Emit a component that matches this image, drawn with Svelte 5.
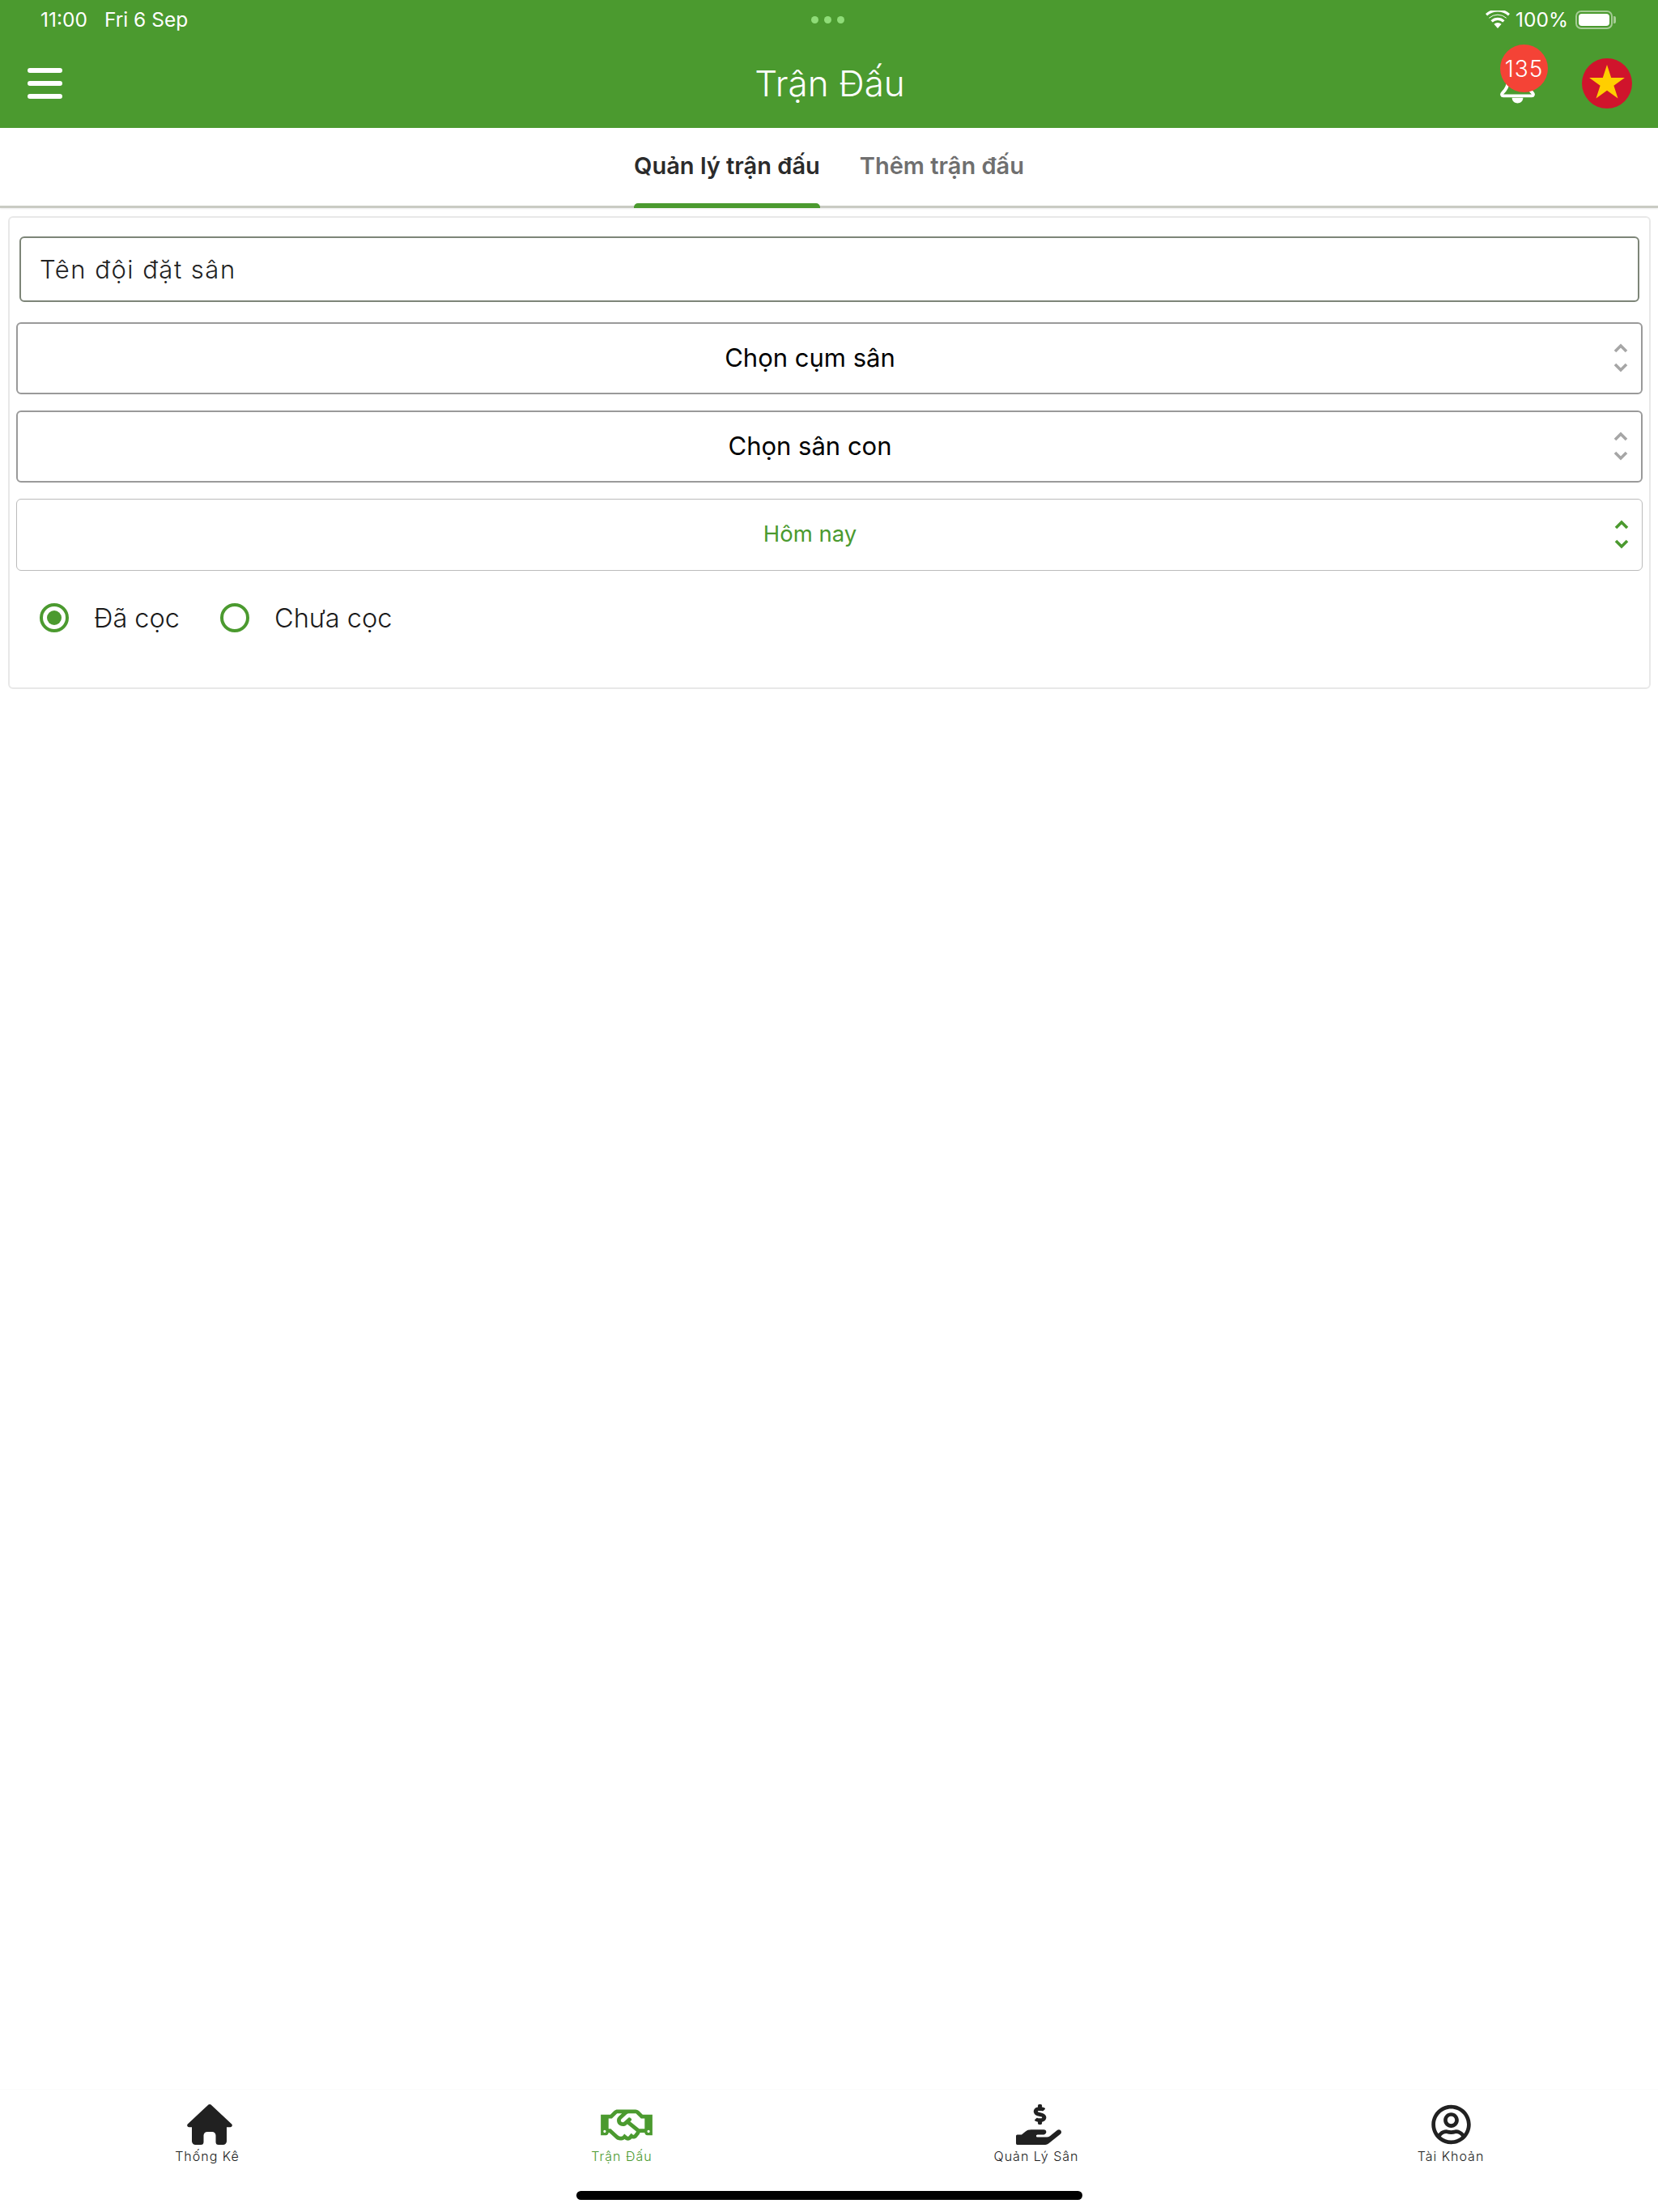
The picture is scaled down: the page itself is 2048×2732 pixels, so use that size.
<script>
  const tabs = [
    { label: 'Thống Kê', icon: 'home' },
    { label: 'Trận Đấu', icon: 'shake', active: true },
    { label: 'Quản Lý Sân', icon: 'hand' },
    { label: 'Tài Khoản', icon: 'user' }
  ];
  const selects = [
    { label: 'Chọn cụm sân' },
    { label: 'Chọn sân con' },
    { label: 'Hôm nay', active: true }
  ];
</script>

<div class="page">
  <header class="header">
    <div class="status">
      <div class="status-left"><span>11:00</span><span>Fri 6 Sep</span></div>
      <div class="dots"><i></i><i></i><i></i></div>
      <div class="status-right">
        <svg class="wifi" viewBox="0 0 30 22" aria-hidden="true">
          <path d="M15 22l-4.600-5.200a6.600 6.600 0 0 1 9.200 0z" fill="#fff"/>
          <path d="M7.600 13.400a10.800 10.800 0 0 1 14.800 0M1 5.200a21 21 0 0 1 28 0" fill="none" stroke="#fff" stroke-width="3.200"/>
          <path d="M4.300 9.300a16 16 0 0 1 21.400 0" fill="none" stroke="#fff" stroke-width="1"/>
        </svg>
        <span>100%</span>
        <div class="battery"><b></b></div>
      </div>
    </div>
    <div class="toolbar">
      <button class="menu" aria-label="menu"><i></i><i></i><i></i></button>
      <h1>Trận Đấu</h1>
      <div class="actions">
        <div class="bell">
          <svg viewBox="0 0 44 28" aria-hidden="true">
            <path d="M10 0c0 7-3 11-7 15-1.500 1.500-1 3.500 1 3.500h36c2 0 2.500-2 1-3.500-4-4-7-8-7-15" fill="none" stroke="#fff" stroke-width="4" stroke-linejoin="round"/>
            <path d="M15 21h14c0 9-14 9-14 0z" fill="#fff"/>
          </svg>
          <span class="badge">135</span>
        </div>
        <svg class="flag" viewBox="0 0 62 62" aria-hidden="true">
          <circle cx="31" cy="31" r="31" fill="#d0142c"/>
          <path d="M31 8L36.200 23.900H52.900L39.400 33.700L44.500 49.600L31 39.800L17.500 49.600L22.600 33.700L9.100 23.900H25.800Z" fill="#ffce00"/>
        </svg>
      </div>
    </div>
  </header>

  <nav class="tabbar">
    <span class="tab on">Quản lý trận đấu</span>
    <span class="tab">Thêm trận đấu</span>
  </nav>

  <section class="card">
    <div class="input">Tên đội đặt sân</div>
    {#each selects as s}
      <div class="select" class:active={s.active}>
        <span class="select-text">{s.label}</span>
        <svg class="chev" viewBox="0 0 18 36" aria-hidden="true">
          <path d="M2 10l7-7 7 7M2 26l7 7 7-7" fill="none" stroke="currentColor" stroke-width="3.600"/>
        </svg>
      </div>
    {/each}
    <div class="radios">
      <span class="radio on"></span><span class="radio-label">Đã cọc</span>
      <span class="radio"></span><span class="radio-label">Chưa cọc</span>
    </div>
  </section>

  <footer class="footer">
    <div class="nav">
      {#each tabs as t}
        <div class="nav-item" class:active={t.active}>
          <div class="nav-icon {t.icon}">
            {#if t.icon === 'home'}
              <svg width="56" height="50" viewBox="0 0 56 50" aria-hidden="true">
                <path fill="currentColor" d="M25.600 1.200c1.400-1.500 3.400-1.500 4.800 0l24.600 23c1.700 1.600.6 4-1.600 4h-4.400v17.300a4.500 4.500 0 0 1-4.500 4.500H39a3.500 3.500 0 0 1-3.500-3.500V38.500a4.500 4.500 0 0 0-4.500-4.500h-6a4.500 4.500 0 0 0-4.500 4.500V46.500A3.500 3.500 0 0 1 17 50h-6.500A4.500 4.500 0 0 1 6 45.500V28.200H2.600c-2.200 0-3.300-2.400-1.600-4z"/>
              </svg>
            {:else if t.icon === 'shake'}
              <svg width="64" height="51" viewBox="0 0 640 512" aria-hidden="true">
                <path fill="currentColor" d="M519.2 127.900l-47.600-47.600A56.252 56.252 0 0 0 432 64H205.200c-14.800 0-29.100 5.900-39.600 16.300L118 127.900H0v255.700h64c17.600 0 31.800-14.200 31.900-31.700h9.100l84.600 76.400c30.900 25.100 73.800 25.700 105.600 3.800 12.500 10.800 26 15.900 41.100 15.900 18.200 0 35.300-7.400 48.800-24 22.100 8.700 48.200 2.600 64-16.800l26.200-32.300c5.600-6.900 9.100-14.800 10.900-23h57.900c.1 17.500 14.400 31.700 31.900 31.700h64V127.900H519.200zM48 351.600c-8.800 0-16-7.200-16-16s7.200-16 16-16 16 7.200 16 16c0 8.900-7.200 16-16 16zm390-6.900l-26.100 32.200c-2.800 3.400-7.800 4-11.300 1.200l-23.900-19.400-30 36.500c-6 7.300-15 4.800-18 2.400l-36.800-31.500-15.600 19.200c-13.900 17.100-39.200 19.700-55.300 6.600l-97.300-88H96V175.800h41.900l61.700-61.600c2-.8 3.700-1.500 5.700-2.300H262l-38.700 35.500c-29.400 26.900-31.100 72.300-4.400 101.300 14.800 16.200 61.200 41.200 101.500 4.400l8.200-7.500 108.200 87.800c3.400 2.800 3.900 7.900 1.200 11.300zm106-40.800h-69.200c-2.300-2.800-4.900-5.400-7.700-7.700l-102.700-83.400 12.500-11.400c6.500-6 7-16.100 1-22.600L367 167.100c-6-6.500-16.100-6.900-22.600-1l-55.200 50.600c-9.500 8.700-25.700 9.400-34.600 0-9.300-9.900-8.500-25.100 1.200-33.900l65.600-60.100c7.400-6.800 17-10.500 27-10.500l83.700-.2c2.100 0 4.100.8 5.500 2.300l61.700 61.600H544v128zm48 47.700c-8.800 0-16-7.200-16-16s7.200-16 16-16 16 7.200 16 16c0 8.900-7.200 16-16 16z"/>
              </svg>
            {:else if t.icon === 'hand'}
              <svg width="56" height="50" viewBox="0 0 576 512" aria-hidden="true">
                <path fill="currentColor" d="M271.060 144.300l54.270 14.300a8.590 8.590 0 0 1 6.630 8.100c0 4.600-4.090 8.400-9.120 8.400h-35.600a30 30 0 0 1-11.190-2.200c-5.240-2.200-11.280-1.700-15.300 2l-19 17.500a11.680 11.680 0 0 0-2.250 2.660 11.420 11.420 0 0 0 3.880 15.740 83.770 83.770 0 0 0 34.510 11.500V240c0 8.800 7.830 16 17.370 16h17.370c9.550 0 17.380-7.200 17.380-16v-17.600c32.930-3.600 57.840-31 53.500-63-3.150-23-22.460-41.300-46.560-47.700L282.680 97.400a8.590 8.590 0 0 1-6.630-8.100c0-4.600 4.090-8.400 9.120-8.400h35.600a30 30 0 0 1 11.190 2.200c5.230 2.200 11.280 1.700 15.300-2l19-17.500a11.310 11.310 0 0 0 2.250-2.600 11.430 11.430 0 0 0-3.840-15.780 83.820 83.820 0 0 0-34.520-11.500V16c0-8.800-7.820-16-17.370-16H295.400c-9.540 0-17.370 7.200-17.370 16v17.600c-32.890 3.600-57.850 31-53.510 63 3.110 23 22.480 41.300 46.540 47.700zM565.270 328.100c-11.800-10.700-30.200-10-42.600 0L430.270 402a63.640 63.640 0 0 1-40 14H272a16 16 0 0 1 0-32h78.290c15.900 0 30.710-10.900 33.250-26.600a31.200 31.200 0 0 0 .46-5.460A32 32 0 0 0 352 320H192a117.660 117.660 0 0 0-74.100 26.290L71.400 384H16a16 16 0 0 0-16 16v96a16 16 0 0 0 16 16h356.770a64 64 0 0 0 40-14L564 377a32 32 0 0 0 1.270-48.900z"/>
              </svg>
            {:else}
              <svg width="49" height="50" viewBox="0 0 496 512" aria-hidden="true">
                <path fill="currentColor" d="M248 104c-53 0-96 43-96 96s43 96 96 96 96-43 96-96-43-96-96-96zm0 144c-26.500 0-48-21.500-48-48s21.500-48 48-48 48 21.500 48 48-21.500 48-48 48zm0-240C111 8 0 119 0 256s111 248 248 248 248-111 248-248S385 8 248 8zm0 448c-49.700 0-95.100-18.300-130.100-48.400 14.900-23 40.400-38.600 69.600-39.500 20.800 6.400 40.600 9.600 60.500 9.600s39.700-3.100 60.500-9.600c29.200 1 54.700 16.500 69.600 39.500-35 30.100-80.400 48.400-130.100 48.400zm162.700-84.100c-24.400-31.400-62.100-51.900-105.100-51.900-10.200 0-26 9.600-57.600 9.600-31.500 0-47.400-9.600-57.600-9.600-42.900 0-80.600 20.500-105.100 51.900C61.900 339.200 48 299.200 48 256c0-110.300 89.700-200 200-200s200 89.700 200 200c0 43.200-13.900 83.200-37.300 115.900z"/>
              </svg>
            {/if}
          </div>
          <span class="nav-label">{t.label}</span>
        </div>
      {/each}
    </div>
    <div class="home-bar"></div>
  </footer>
</div>

<style>
  :global(body) { margin: 0; background: #fff; }
  .page {
    width: 2048px; height: 2732px; display: flex; flex-direction: column;
    font-family: Inter, Roboto, sans-serif; color: #212121; background: #fff; overflow: hidden;
  }
  .header { background: #4b9a2f; color: #fff; height: 158px; box-sizing: border-box; }
  .status {
    height: 48px; display: grid; grid-template-columns: 1fr auto 1fr; align-items: center;
    padding: 0 53px 0 50px; font-size: 24.500px;
  }
  .status-left { display: flex; gap: 21px; }
  .dots { display: flex; gap: 7px; }
  .dots i { width: 9px; height: 9px; border-radius: 50%; background: #8fdc78; }
  .status-right { display: flex; align-items: center; justify-content: flex-end; gap: 7px; }
  .wifi { width: 30px; height: 22px; }
  .battery {
    width: 46px; height: 23px; margin-left: 2px; margin-right: 3px; box-sizing: border-box; border: 2px solid #a5cc95; border-radius: 7px;
    padding: 2px; position: relative;
  }
  .battery b { display: block; height: 100%; background: #fff; border-radius: 4px; }
  .battery::after {
    content: ''; position: absolute; right: -6px; top: 5px; width: 3px; height: 9px; background: #a5cc95; border-radius: 0 2px 2px 0;
  }
  .toolbar {
    height: 110px; display: grid; grid-template-columns: 1fr auto 1fr; align-items: center; padding: 0 32px 0 34px;
  }
  .menu {
    justify-self: start; display: flex; flex-direction: column; gap: 10px; padding: 0; background: none; border: 0;
  }
  .menu i { display: block; width: 43px; height: 6px; border-radius: 3px; background: #fff; }
  h1 { margin: 0; font-size: 44px; font-weight: 300; line-height: 1; }
  .actions { display: flex; justify-content: flex-end; align-items: center; gap: 58px; }
  .bell { position: relative; width: 43px; height: 28px; margin-top: 22px; }
  .bell svg { display: block; width: 43px; height: 28px; }
  .badge {
    position: absolute; left: 0; top: -45px; width: 59px; height: 59px; border-radius: 50%; background: #f44336;
    display: flex; align-items: center; justify-content: center; font-size: 28px; font-weight: 300; letter-spacing: 1px; color: #fff;
  }
  .flag { width: 62px; height: 62px; display: block; }

  .tabbar {
    height: 99px; box-sizing: border-box; display: flex; justify-content: center; gap: 49px;
    border-bottom: 3px solid #c9cbc3; box-shadow: 0 1px 2px rgba(0,0,0,.08);
  }
  .tab {
    display: flex; align-items: center; height: 99px; flex: none; box-sizing: border-box; padding-bottom: 7px;
    font-size: 29px; font-weight: 600; color: #6f6f6f; position: relative;
  }
  .tab.on { color: #2b2b2b; }
  .tab.on::after {
    content: ''; position: absolute; left: 0; right: 0; bottom: 0; height: 6px; background: #4b9a2f; border-radius: 5px 5px 0 0;
  }

  .card {
    margin: 10px 9px 0 10px; height: 584px; box-sizing: border-box; border: 2px solid #e8e8e8; border-radius: 6px;
    padding: 23px 8px 0; display: flex; flex-direction: column;
  }
  .input {
    margin: 0 4px 24.500px 4px; height: 81px; box-sizing: border-box; border: 2px solid #7d8578; border-radius: 6px;
    display: flex; align-items: center; padding: 0 23px; font-size: 31px; font-weight: 300; color: #222; letter-spacing: 1.500px;
  }
  .select {
    height: 89px; box-sizing: border-box; border: 2px solid #9a9a9a; border-radius: 6px; margin-bottom: 20px;
    display: flex; align-items: center; padding-right: 16px; color: #000; font-size: 31px; font-weight: 400;
  }
  .select-text { flex: 1; text-align: center; padding-bottom: 2px; }
  .chev { width: 18px; height: 36px; margin-left: 14px; color: #a6a6a6; }
  .select.active { border: 1.500px solid #bbb; color: #4b9a2f; font-size: 27.500px; }
  .select.active .chev { color: #4b9a2f; }
  .radios { display: flex; align-items: center; padding: 19px 0 0 29px; }
  .radio {
    width: 36px; height: 36px; box-sizing: border-box; border: 4px solid #4b9a2f; border-radius: 50%;
    display: flex; align-items: center; justify-content: center; margin-right: 31px;
  }
  .radio.on::after { content: ''; width: 18px; height: 18px; border-radius: 50%; background: #4b9a2f; }
  .radio-label { font-size: 32.500px; font-weight: 300; margin-right: 50px; color: #1a1a1a; }

  .footer { margin-top: auto; border-top: 1px solid #fbfbfb; }
  .nav { display: flex; padding-top: 18px; }
  .nav-item { flex: 1; display: flex; flex-direction: column; align-items: center; color: #212121; }
  .nav-item.active { color: #4b9a2f; }
  .nav-icon { height: 50px; display: flex; align-items: center; justify-content: center; }
  .nav-icon.home { margin-left: 6px; }
  .nav-icon.shake { margin-left: 12px; }
  .nav-icon.hand { margin-left: 5px; }
  .nav-label { font-size: 16px; font-weight: 300; line-height: 20px; margin-top: 4px; letter-spacing: 1px; }
  .home-bar { width: 625px; height: 11px; border-radius: 6px; background: #000; margin: 33px auto 15px; }
</style>
